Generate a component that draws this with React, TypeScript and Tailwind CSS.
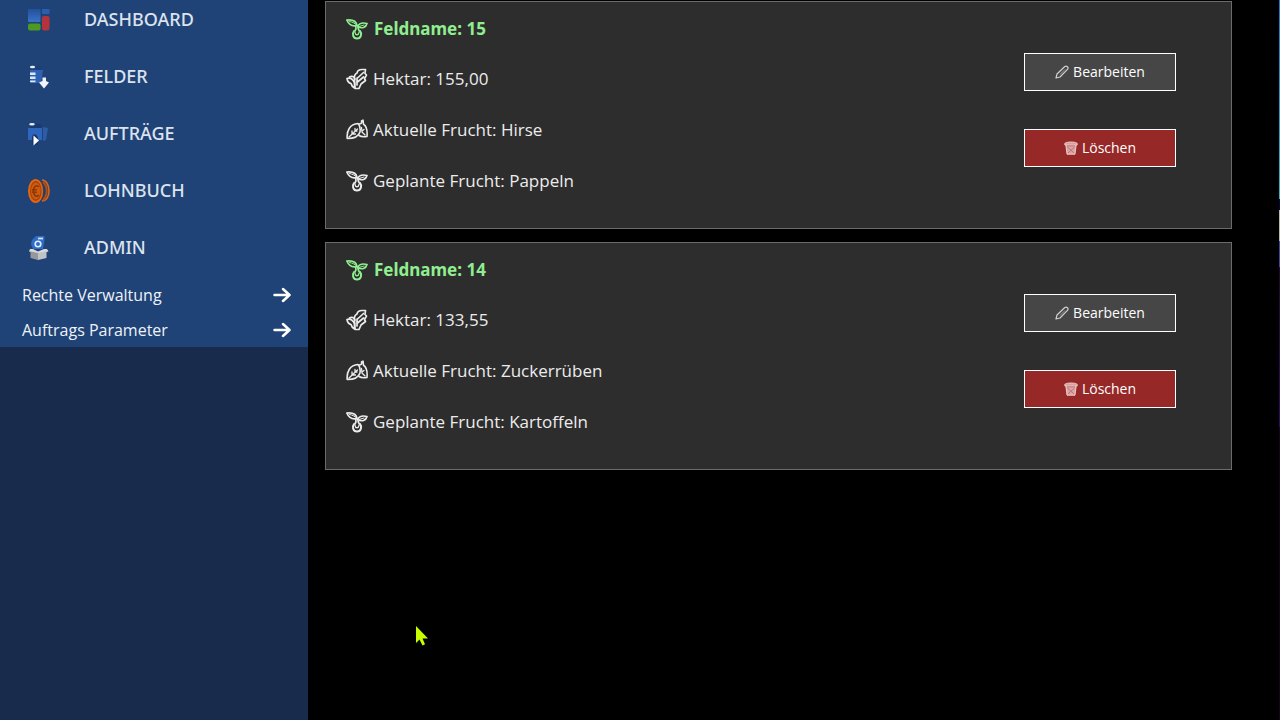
import type { ReactNode } from "react";

type Feld = {
  name: string;
  hektar: string;
  aktuell: string;
  geplant: string;
};

const felder: Feld[] = [
  { name: "15", hektar: "155,00", aktuell: "Hirse", geplant: "Pappeln" },
  { name: "14", hektar: "133,55", aktuell: "Zuckerrüben", geplant: "Kartoffeln" },
];

const DashboardIcon = () => (
  <svg viewBox="0 0 24 24" className="size-6">
    <defs>
      <linearGradient id="dashBlue" x1="0" y1="0" x2="0" y2="1">
        <stop offset="0" stopColor="#24509a" />
        <stop offset="1" stopColor="#3a72c8" />
      </linearGradient>
    </defs>
    <rect x="1" y="1" width="12.500" height="13" rx="1" fill="url(#dashBlue)" />
    <rect x="1" y="15.500" width="12.500" height="7" rx="2" fill="#4c9a22" />
    <rect x="15" y="1" width="7.500" height="5" rx="1" fill="#2b5fae" />
    <rect x="15" y="8" width="7.500" height="14.500" rx="2" fill="#b5343c" />
  </svg>
);

const FelderIcon = () => (
  <svg viewBox="0 0 24 24" className="size-6">
    <path d="M3 5h13l-2 13H4z" fill="#2f62b5" />
    <path d="M9 1h6v4H9z" fill="#1c3f75" />
    <ellipse cx="5.5" cy="2" rx="2.6" ry="1.2" fill="#e8eef8" />
    <path d="M3 7.500h5.500v2.500H3zM3 11.500h5.500v2.500H3zM3 15.400h5.500v1.800H3z" fill="#dfe8f7" />
    <path d="M15.500 12.500h3.500v3.500l3 1.500-5 6-5-6 3.500-1.500z" fill="#f1f5fb" />
  </svg>
);

const AuftraegeIcon = () => (
  <svg viewBox="0 0 24 24" className="size-6">
    <path d="M1 6h14v12h-3l-4-3-3 3H1z" fill="#2f66bd" />
    <path d="M3 2h11v4H3z" fill="#183a70" />
    <path d="M16 5l5 1-2 12-3 1z" fill="#2b5da8" />
    <ellipse cx="5" cy="2.2" rx="2.8" ry="1.2" fill="#e8eef8" />
    <path d="M5 14c2-3 5-2 6 2v7H5z" fill="#17386c" />
    <path d="M6.500 13.500l5.500 5-5.500 5z" fill="#fff" />
  </svg>
);

const LohnbuchIcon = () => (
  <svg viewBox="0 0 24 26" className="h-[26px] w-6">
    <path d="M15 2c4 0 7 5 7 11s-3 10-7 10" fill="#213f70" stroke="#dd6413" strokeWidth="1.6" />
    <path d="M16 4c5 5 5 13 0 18" fill="none" stroke="#b84c09" strokeWidth="2" />
    <ellipse cx="8.6" cy="13" rx="7.6" ry="12" fill="#e26612" />
    <ellipse cx="8.8" cy="13" rx="5.8" ry="10" fill="#a63f04" />
    <ellipse cx="8.8" cy="13" rx="4.8" ry="8.4" fill="#cf5a0d" />
    <path
      d="M12 9c-3-3-5.5 0-5.5 4s2.500 7 5.500 4M5 11.800h5M5 14.300h5"
      fill="none"
      stroke="#8a370a"
      strokeWidth="1.6"
    />
  </svg>
);

const AdminIcon = () => (
  <svg viewBox="0 0 24 26" className="h-[26px] w-6">
    <path d="M5 5l4-4h8.500v4l-1.500 9H6L4 9z" fill="#2f6cc6" />
    <path d="M11 3.500h5" stroke="#cfe0f8" strokeWidth="1.800" />
    <circle cx="11" cy="9" r="2.800" fill="none" stroke="#e3edfa" strokeWidth="1.600" />
    <path d="M3 14h3l5 2.500L17 14h3l1.500 2.500-10 2.500-9.500-2.500z" fill="#d7d9dc" />
    <path d="M3.500 16.500l7.500 1.500v7l-7.500-2z" fill="#96989c" />
    <path d="M11 18l8.500-1.500v6.500L11 25z" fill="#bfc2c6" />
  </svg>
);

const SproutIcon = () => (
  <svg
    viewBox="0 0 22 22"
    className="size-[22px] shrink-0"
    fill="none"
    stroke="currentColor"
    strokeWidth="1.700"
    strokeLinejoin="round"
    strokeLinecap="round"
  >
    <path d="M.8 2c5-.5 9.500 1 10.200 5.500C7 8.500 3 7 .8 2z" />
    <path d="M3.500 3.500c3 .5 6 2 7.500 4" strokeWidth="1" />
    <path d="M11.500 8.500C13 5.500 17 4.500 21 5.500c-1 4-5 5.500-9.500 3z" />
    <path d="M13 8.500l5-1.500" strokeWidth="1" />
    <path d="M9.800 8.500c.5 1.500.2 3-.8 4.500M12 9.500c.2 1.200.5 2.500 1.300 3.500" />
    <path d="M8 13c-2 2.500-1.200 7.500 3 7.500s5.200-5 3-7.500" strokeWidth="2" />
    <path d="M9 14.500c.5 3 3.500 3 4 0" strokeWidth="1.400" />
  </svg>
);

const GrainIcon = () => (
  <svg
    viewBox="0 0 22 22"
    className="size-[22px] shrink-0"
    fill="none"
    stroke="currentColor"
    strokeWidth="1.700"
    strokeLinejoin="round"
    strokeLinecap="round"
  >
    <path d="M8.500 11c-.5-3 .5-5 2.500-6 .5-2.500 2.500-3.500 5-3.500h3.500l-.5 4 1.500 1.500-2 3.500 1 2-4.500 3.500-2 4.500H9z" />
    <path d="M1 10.500c3-1 5.500 0 7.500 4V20c-2-1-3-2.500-3.500-4.500-2-.5-3.500-2-4-5z" />
    <path d="M3.500 9C6 7.500 8 8.500 9 11M11 10.500l6.500-6M11.500 14l6-5M11 17v-7" />
  </svg>
);

const LeafIcon = () => (
  <svg
    viewBox="0 0 22 22"
    className="size-[22px] shrink-0"
    fill="none"
    stroke="currentColor"
    strokeWidth="1.600"
    strokeLinejoin="round"
    strokeLinecap="round"
  >
    <path d="M1.200 19.500C.5 11.500 4 5 12 4.500c2 2 2.500 5 2 8.500-1.500 5-6.500 6.500-12.800 6.500z" />
    <path d="M3 18l8.500-8M6 12v3h3.500M9 9.500v2.500h2" strokeWidth="1.300" />
    <path d="M13 5c2 0 3-.5 2.500-3l1.500-.8.5 4c3 1.800 4 6.300 3.500 12.300-3 .5-6 .5-8-1" />
    <path d="M15.500 8.500l.5 4.500 3 3M16 12l2-1.500" strokeWidth="1.300" />
  </svg>
);

const PencilIcon = () => (
  <svg
    viewBox="0 0 14 14"
    className="size-[14px]"
    fill="none"
    stroke="#d0d0d0"
    strokeWidth="1.200"
    strokeLinejoin="round"
  >
    <path d="M1 13l1-4L9.800 1.500c2-1 4 .7 2.900 2.700L5 12z" />
    <path d="M5 9.500l5-5" strokeWidth=".6" />
  </svg>
);

const TrashIcon = () => (
  <svg viewBox="0 0 14 14" className="size-[14px]" fill="none">
    <path d="M1.800 3.500h10.400L11 13.200H3z" fill="#dca5a5" stroke="#edcaca" />
    <path d="M.8 2.200C3 .5 11 .5 13.200 2.200v1.800H.8z" fill="#d9a0a0" stroke="#f0d2d2" strokeWidth=".8" />
    <path d="M3.500 6l6.500 6M10.500 6L4 12M3 4.800h8" stroke="#b56060" strokeWidth=".7" />
  </svg>
);

const ArrowIcon = () => (
  <svg
    viewBox="0 0 18 16"
    className="h-4 w-[18px]"
    fill="none"
    stroke="#fff"
    strokeWidth="2.500"
    strokeLinecap="round"
    strokeLinejoin="round"
  >
    <path d="M1.500 8h15M10 2l6.500 6L10 14" />
  </svg>
);

const menu = [
  { label: "DASHBOARD", icon: <DashboardIcon /> },
  { label: "FELDER", icon: <FelderIcon /> },
  { label: "AUFTRÄGE", icon: <AuftraegeIcon /> },
  { label: "LOHNBUCH", icon: <LohnbuchIcon /> },
  { label: "ADMIN", icon: <AdminIcon /> },
];

const submenu = ["Rechte Verwaltung", "Auftrags Parameter"];

const Sidebar = () => (
  <aside className="w-[308px] shrink-0 bg-[#182b4d]">
    {/* the list is scrolled a little, so its first entry starts above the edge */}
    <nav className="-mt-[9px] bg-[#204377] pb-px">
      {menu.map((item) => (
        <a
          key={item.label}
          href="#"
          className="flex h-[57px] items-center pl-[27px] font-['Noto_Sans',sans-serif] text-[18px] font-medium text-[#dde3ee]"
        >
          <span className="flex w-[57px] items-center">{item.icon}</span>
          {item.label}
        </a>
      ))}
      {submenu.map((label) => (
        <a
          key={label}
          href="#"
          className="flex h-[35px] items-center justify-between pt-[2px] pr-[17px] pl-[22px] text-[16px] text-[#eef2f8]"
        >
          {label}
          <ArrowIcon />
        </a>
      ))}
    </nav>
  </aside>
);

const InfoRow = ({ icon, children }: { icon: ReactNode; children: ReactNode }) => (
  <p className="flex h-[51px] items-center gap-[5px] text-[17px] text-[#ececec]">
    {icon}
    <span>{children}</span>
  </p>
);

const FeldCard = ({ feld }: { feld: Feld }) => (
  <article className="flex justify-between border border-[#6b6b6b] bg-[#2d2d2d] pr-[55px] pb-[22px] pl-5">
    <div>
      <h2 className="flex h-[51px] items-center gap-[6px] pt-[2px] font-['Noto_Sans',sans-serif] text-[17px] font-bold text-[#90ee90]">
        <SproutIcon />
        <span>Feldname: {feld.name}</span>
      </h2>
      <InfoRow icon={<GrainIcon />}>Hektar: {feld.hektar}</InfoRow>
      <InfoRow icon={<LeafIcon />}>Aktuelle Frucht: {feld.aktuell}</InfoRow>
      <InfoRow icon={<SproutIcon />}>Geplante Frucht: {feld.geplant}</InfoRow>
    </div>
    <div className="flex flex-col gap-[38px] pt-[51px]">
      <button className="flex h-[38px] w-[152px] items-center justify-center gap-1 border border-white bg-[#464646] pb-px text-[14px] text-white">
        <PencilIcon />
        Bearbeiten
      </button>
      <button className="flex h-[38px] w-[152px] items-center justify-center gap-1 border border-white bg-[#962828] pb-px text-[14px] text-white">
        <TrashIcon />
        Löschen
      </button>
    </div>
  </article>
);

const App = () => {
  return (
    <div className="relative flex h-screen overflow-hidden bg-black font-['Open_Sans',sans-serif]">
      <Sidebar />
      <main className="flex flex-1 flex-col gap-[13px] pt-px pr-[47px] pl-[17px]">
        {felder.map((feld) => (
          <FeldCard key={feld.name} feld={feld} />
        ))}
      </main>
      {/* sliver of the neighbouring window */}
      <div className="flex w-px flex-col">
        <div className="h-[199px] bg-linear-to-b from-[#1c78c8] to-[#35b5c0]" />
        <div className="h-[11px] bg-[#05053a]" />
        <div className="h-[31px] bg-[#b9b9a8]" />
        <div className="h-[26px] bg-[#4444a0]" />
        <div className="h-[160px] bg-linear-to-b from-[#200828] to-[#320a64]" />
        <div className="flex-1 bg-[#12041a]" />
      </div>
      <svg viewBox="0 0 14 20" className="absolute top-[626px] left-[415px] h-5 w-[14px]">
        <path d="M1 0v17l3.500-3.500L7.500 19.500l2.500-1.200-2.500-5.800H13z" fill="#c8ff00" />
      </svg>
    </div>
  );
};

export default App;
